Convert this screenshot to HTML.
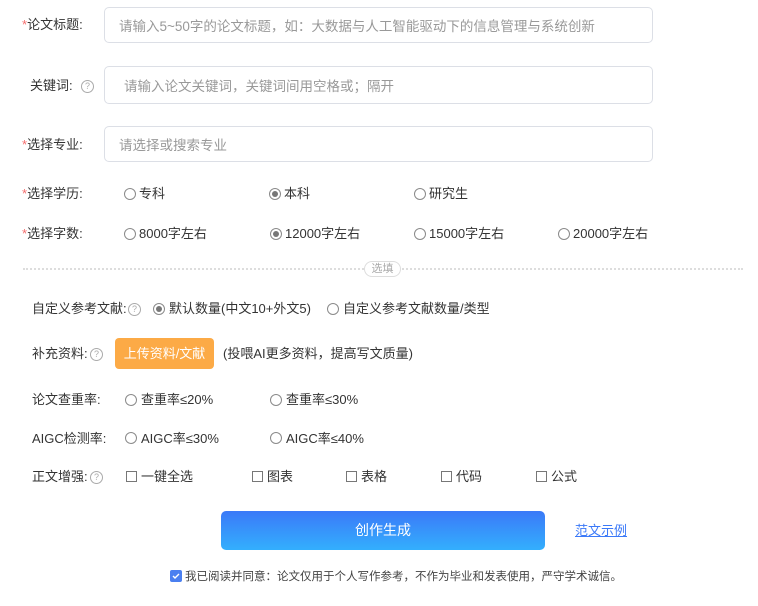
<!DOCTYPE html>
<html><head><meta charset="utf-8"><style>
*{margin:0;padding:0;box-sizing:border-box}
body{width:758px;height:606px;background:#fff;position:relative;font-family:"Liberation Sans","Noto Sans CJK SC",sans-serif;font-size:13px;color:#333;overflow:hidden}
.a{position:absolute;white-space:nowrap;line-height:16px}
.star{color:#f56c6c}
.inp{position:absolute;left:104px;width:549px;border:1px solid #dcdfe6;border-radius:5px;color:#999;font-size:13.5px;padding-left:14px;display:flex;align-items:center}
.r{position:absolute;width:12px;height:12px;border:1px solid #8a8a8a;border-radius:50%;background:#fff}
.r.on::after{content:"";position:absolute;left:2px;top:2px;width:6px;height:6px;border-radius:50%;background:#777}
.c{position:absolute;width:11px;height:11px;border:1px solid #777;background:#fff}
.q{position:absolute;width:13px;height:13px;border:1px solid #aaa;border-radius:50%;color:#aaa;font-size:9px;line-height:11px;text-align:center}
</style></head><body>
<div class="a" style="left:22px;top:17px"><span class="star">*</span>论文标题:</div>
<div class="inp" style="top:7px;height:36px">请输入5~50字的论文标题，如：大数据与人工智能驱动下的信息管理与系统创新</div>
<div class="a" style="left:30px;top:78px">关键词:</div><div class="q" style="left:81px;top:80px">?</div>
<div class="inp" style="top:66px;height:38px;padding-left:19px">请输入论文关键词，关键词间用空格或；隔开</div>
<div class="a" style="left:22px;top:137px"><span class="star">*</span>选择专业:</div>
<div class="inp" style="top:126px;height:36px">请选择或搜索专业</div>

<div class="a" style="left:22px;top:186px"><span class="star">*</span>选择学历:</div>
<div class="r" style="left:124px;top:188px"></div><div class="a" style="left:139px;top:186px">专科</div>
<div class="r on" style="left:269px;top:188px"></div><div class="a" style="left:284px;top:186px">本科</div>
<div class="r" style="left:414px;top:188px"></div><div class="a" style="left:429px;top:186px">研究生</div>

<div class="a" style="left:22px;top:226px"><span class="star">*</span>选择字数:</div>
<div class="r" style="left:124px;top:228px"></div><div class="a" style="left:139px;top:226px">8000字左右</div>
<div class="r on" style="left:270px;top:228px"></div><div class="a" style="left:285px;top:226px">12000字左右</div>
<div class="r" style="left:414px;top:228px"></div><div class="a" style="left:429px;top:226px">15000字左右</div>
<div class="r" style="left:558px;top:228px"></div><div class="a" style="left:573px;top:226px">20000字左右</div>

<div style="position:absolute;left:23px;top:268px;width:720px;border-top:2px dotted #ddd"></div>
<div class="a" style="left:364px;top:261px;width:37px;height:16px;border:1px solid #ddd;border-radius:8px;background:#fff;color:#aaa;font-size:11px;line-height:14px;text-align:center">选填</div>

<div class="a" style="left:32px;top:301px">自定义参考文献:</div><div class="q" style="left:128px;top:303px">?</div>
<div class="r on" style="left:153px;top:303px"></div><div class="a" style="left:169px;top:301px">默认数量(中文10+外文5)</div>
<div class="r" style="left:327px;top:303px"></div><div class="a" style="left:343px;top:301px">自定义参考文献数量/类型</div>

<div class="a" style="left:32px;top:346px">补充资料:</div><div class="q" style="left:90px;top:348px">?</div>
<div class="a" style="left:115px;top:338px;width:99px;height:31px;background:#fcaa46;border-radius:4px;color:#fff;line-height:31px;text-align:center">上传资料/文献</div>
<div class="a" style="left:223px;top:346px">(投喂AI更多资料，提高写文质量)</div>

<div class="a" style="left:32px;top:392px">论文查重率:</div>
<div class="r" style="left:125px;top:394px"></div><div class="a" style="left:141px;top:392px">查重率≤20%</div>
<div class="r" style="left:270px;top:394px"></div><div class="a" style="left:286px;top:392px">查重率≤30%</div>

<div class="a" style="left:32px;top:431px">AIGC检测率:</div>
<div class="r" style="left:125px;top:432px"></div><div class="a" style="left:141px;top:431px">AIGC率≤30%</div>
<div class="r" style="left:270px;top:432px"></div><div class="a" style="left:286px;top:431px">AIGC率≤40%</div>

<div class="a" style="left:32px;top:469px">正文增强:</div><div class="q" style="left:90px;top:471px">?</div>
<div class="c" style="left:126px;top:471px"></div><div class="a" style="left:141px;top:469px">一键全选</div>
<div class="c" style="left:252px;top:471px"></div><div class="a" style="left:267px;top:469px">图表</div>
<div class="c" style="left:346px;top:471px"></div><div class="a" style="left:361px;top:469px">表格</div>
<div class="c" style="left:441px;top:471px"></div><div class="a" style="left:456px;top:469px">代码</div>
<div class="c" style="left:536px;top:471px"></div><div class="a" style="left:551px;top:469px">公式</div>

<div class="a" style="left:221px;top:511px;width:324px;height:39px;border-radius:5px;background:linear-gradient(#3b79f8,#33affd);color:#fff;font-size:14px;line-height:39px;text-align:center">创作生成</div>
<div class="a" style="left:575px;top:523px;color:#3b79f8;text-decoration:underline">范文示例</div>

<div style="position:absolute;left:170px;top:570px;width:12px;height:12px;background:#4a7ff0;border-radius:2px"><svg width="12" height="12" viewBox="0 0 12 12"><path d="M3 6l2 2 4-4" stroke="#fff" stroke-width="1.4" fill="none"/></svg></div>
<div class="a" style="left:185px;top:569px;font-size:11.5px;color:#444">我已阅读并同意：论文仅用于个人写作参考，不作为毕业和发表使用，严守学术诚信。</div>
</body></html>
